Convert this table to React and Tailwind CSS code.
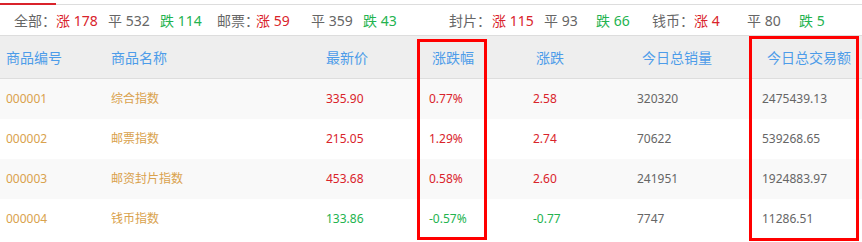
import React from 'react';

const STATS = [
    { label: '全部：', lw: 'w-[42px]', ml: 'ml-[14px]', items: [['涨 178', 'up', 'w-[52px]'], ['平 532', 'flat', 'w-[52px]'], ['跌 114', 'down', 'w-[57px]']] },
    { label: '邮票：', lw: 'w-[39px]', ml: '', items: [['涨 59', 'up', 'w-[55px]'], ['平 359', 'flat', 'w-[52px]'], ['跌 43', 'down', 'w-[86px]']] },
    { label: '封片：', lw: 'w-[43px]', ml: '', items: [['涨 115', 'up', 'w-[52px]'], ['平 93', 'flat', 'w-[52px]'], ['跌 66', 'down', 'w-[56px]']] },
    { label: '钱币：', lw: 'w-[42px]', ml: '', items: [['涨 4', 'up', 'w-[53px]'], ['平 80', 'flat', 'w-[52px]'], ['跌 5', 'down', 'w-[40px]']] },
];

const TONE = {
    up: 'text-[#d9232b]',
    flat: 'text-[#666]',
    down: 'text-[#23b34f]',
};

const COLUMNS = [
    { title: '商品编号', w: 'w-[105px]', hp: 'pl-[6px]' },
    { title: '商品名称', w: 'w-[215px]', hp: 'pl-[6px]' },
    { title: '最新价', w: 'w-[103px]', hp: 'pl-[6px]' },
    { title: '涨跌幅', w: 'w-[104px]', hp: 'pl-[9px]' },
    { title: '涨跌', w: 'w-[104px]', hp: 'pl-[9px]' },
    { title: '今日总销量', w: 'w-[125px]', hp: 'pl-[11px]' },
    { title: '今日总交易额', w: 'w-[106px]', hp: 'pl-[11px]' },
];

const ROWS = [
    ['000001', '综合指数', '335.90', '0.77%', '2.58', '320320', '2475439.13', 'up'],
    ['000002', '邮票指数', '215.05', '1.29%', '2.74', '70622', '539268.65', 'up'],
    ['000003', '邮资封片指数', '453.68', '0.58%', '2.60', '241951', '1924883.97', 'up'],
    ['000004', '钱币指数', '133.86', '-0.57%', '-0.77', '7747', '11286.51', 'down'],
];

function App() {
    return (
        <div
            className="relative w-[862px] h-[242px] overflow-hidden bg-white"
            style={{ fontFamily: '"Noto Sans", "Noto Sans CJK SC", sans-serif' }}
        >
            {/* tab underline */}
            <div className="h-[3px]" />
            <div className="flex h-[2px]">
                <div className="w-[56px] bg-[#d9232b]" />
                <div className="flex-1 border-b border-[#ddd]" />
            </div>

            {/* summary stats */}
            <div className="flex items-center h-[30px] text-[14px] text-[#666] whitespace-nowrap">
                {STATS.map((group, gi) => (
                    <div key={gi} className={`flex ${group.ml}`}>
                        <span className={group.lw}>{group.label}</span>
                        {group.items.map(([text, tone, w]) => (
                            <span key={text} className={`${w} ${TONE[tone]}`}>{text}</span>
                        ))}
                    </div>
                ))}
            </div>

            {/* table header */}
            <div className="flex items-center h-[44px] bg-[#eee] border-y border-[#ddd] text-[14px] text-[#4d9ce9]">
                {COLUMNS.map(col => (
                    <div key={col.title} className={`${col.w} ${col.hp}`}>{col.title}</div>
                ))}
            </div>

            {/* table rows */}
            {ROWS.map((row, ri) => {
                const tone = TONE[row[7]];
                return (
                    <div
                        key={row[0]}
                        className={`flex items-center h-10 text-[12px] ${ri % 2 === 0 ? 'bg-[#f9f9f9]' : 'bg-white'}`}
                    >
                        <div className="w-[105px] pl-[6px] text-[#d9a24d]">{row[0]}</div>
                        <div className="w-[215px] pl-[6px] text-[#d9a24d]">{row[1]}</div>
                        <div className={`w-[103px] pl-[6px] ${tone}`}>{row[2]}</div>
                        <div className={`w-[104px] pl-[6px] ${tone}`}>{row[3]}</div>
                        <div className={`w-[104px] pl-[6px] ${tone}`}>{row[4]}</div>
                        <div className="w-[125px] pl-[6px] text-[#666]">{row[5]}</div>
                        <div className="w-[106px] pl-[6px] text-[#666]">{row[6]}</div>
                    </div>
                );
            })}

            {/* highlight boxes */}
            <div className="absolute left-[417px] top-[39px] w-[70px] h-[201px] border-[3px] border-[#ff0000]" />
            <div className="absolute left-[749px] top-[36px] w-[110px] h-[205px] border-[3px] border-[#ff0000]" />
        </div>
    );
}

export default App;
